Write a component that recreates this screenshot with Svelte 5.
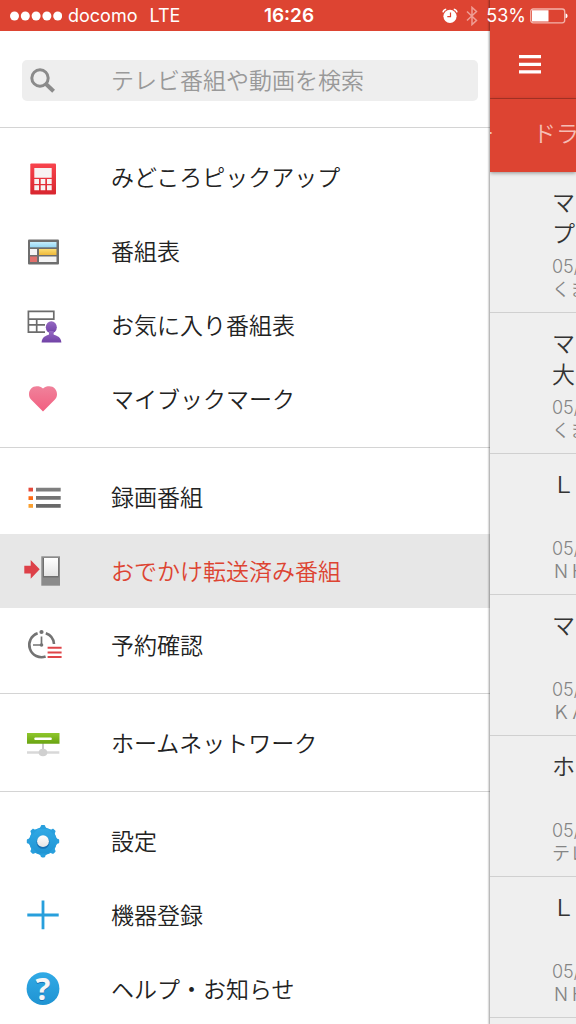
<script lang="ts">
	type Item = { icon: string; label: string };

	const sections: Item[][] = [
		[
			{ icon: 'pickup', label: 'みどころピックアップ' },
			{ icon: 'guide', label: '番組表' },
			{ icon: 'favorite', label: 'お気に入り番組表' },
			{ icon: 'heart', label: 'マイブックマーク' }
		],
		[
			{ icon: 'list', label: '録画番組' },
			{ icon: 'transfer', label: 'おでかけ転送済み番組' },
			{ icon: 'reserve', label: '予約確認' }
		],
		[{ icon: 'network', label: 'ホームネットワーク' }],
		[
			{ icon: 'settings', label: '設定' },
			{ icon: 'plus', label: '機器登録' },
			{ icon: 'help', label: 'ヘルプ・お知らせ' }
		]
	];

	const programs = [
		{ title: 'マ\nプ', date: '05/', channel: 'くま' },
		{ title: 'マ\n大', date: '05/', channel: 'くま' },
		{ title: 'Ｌ', date: '05/', channel: 'ＮＨ' },
		{ title: 'マ', date: '05/', channel: 'ＫＡ' },
		{ title: 'ホ', date: '05/', channel: 'テレ' },
		{ title: 'Ｌ', date: '05/', channel: 'ＮＨ' }
	];

	let active = $state('transfer');
	let query = $state('');
</script>

{#snippet glyph(name: string)}
	<svg class="icon" viewBox="0 0 44 44" aria-hidden="true">
		{#if name === 'pickup'}
			<rect x="9.3" y="8.5" width="25.7" height="31" rx="1" fill="url(#red)" />
			<path
				fill="#f7f3f3"
				d="M13.3 13h17.4v9.7H13.3zM13.3 24H18v5h-4.7zM19.7 24h4.6v5h-4.6zM26 24h4.7v5H26zM13.3 30.2H18v5h-4.7zM19.7 30.2h4.6v5h-4.6zM26 30.2h4.7v5H26z"
			/>
		{:else if name === 'guide'}
			<rect x="7" y="10.5" width="31" height="25" rx="1" fill="#6e6e6e" />
			<path fill="url(#sky)" d="M9 13h26.5v5.3H9z" />
			<path fill="#f4f4f4" d="M9 20h7v6H9zM18 27.5h17.5v5.5H18z" />
			<path fill="url(#gold)" d="M18 20h17.5v6H18z" />
			<path fill="#e0706c" d="M9 27.5h7V33H9z" />
		{:else if name === 'favorite'}
			<path
				fill="none"
				stroke="#6c6c6c"
				stroke-width="1.7"
				d="M24 29.1H7.4V8.4h25.4v7.7H7.4M7.4 21.9H24M15.7 16v13"
			/>
			<ellipse cx="30.3" cy="24.2" rx="5.5" ry="6" fill="url(#purple)" />
			<path
				fill="url(#purple)"
				d="M28 28h4.6v3.2c0 1.3 7.8 1.2 7.8 8.2H20.6c0-7 7.4-6.9 7.4-8.2z"
			/>
		{:else if name === 'heart'}
			<path
				fill="url(#pink)"
				d="M22 34.6 10.3 22.8C8.7 21.2 8 19.4 8 17.2c0-4.7 3.3-8 7.6-8 2.600 0 4.700.6 6.400 2.400 1.700-1.800 3.800-2.400 6.400-2.400 4.300 0 7.600 3.300 7.600 8 0 2.200-.7 4-2.300 5.600z"
			/>
		{:else if name === 'list'}
			<path fill="#e5493a" d="M7.5 12.7H12v3.8H7.5z" />
			<path fill="#ff6a13" d="M7.5 21.2H12V25H7.5z" />
			<path fill="#fba02f" d="M7.5 29H12v3.8H7.5z" />
			<path
				fill="url(#steel)"
				d="M15 12.7h24.700v3.800H15zM15 21h24.700v3.800H15zM15 29h24.700v3.800H15z"
			/>
		{:else if name === 'transfer'}
			<path fill="#dd4048" d="M3.3 16.700h6.400V11l9 9.300-9 9.400v-5.200H3.300z" />
			<path fill="#8b8b8b" d="M20.300 7.300H39v29.400H20.300z" />
			<path fill="#6f6f6f" d="M22 9h15.800v19.500H22z" />
			<path fill="url(#screen)" d="M23 9h14v18H23z" />
		{:else if name === 'reserve'}
			<path
				fill="none"
				stroke="#737373"
				stroke-width="2.600"
				d="M16.600 10.300A12.300 12.300 0 1 0 24.600 33.600M24.800 10.300A12.300 12.300 0 0 1 33 21"
			/>
			<circle cx="20.500" cy="9" r="2.100" fill="#737373" />
			<path fill="none" stroke="#737373" stroke-width="1.700" d="M20.500 13.500V22H12" />
			<circle cx="20.500" cy="22" r="1.800" fill="#737373" />
			<path fill="#df4549" d="M26.600 23.800h14v2h-14zM26.600 28.400h14v2h-14zM26.600 33h14v2h-14z" />
		{:else if name === 'network'}
			<path fill="#c9c9c9" d="M21 22h2v8h-2z" />
			<path fill="#d8d8d8" d="M6 30.200h32.300v2.600H6z" />
			<ellipse cx="22" cy="31.500" rx="4.300" ry="3.800" fill="#d0d0d0" />
			<path fill="url(#green)" d="M6 12h32.500v10.800H6z" />
			<rect x="13.300" y="16.500" width="17.500" height="2.400" rx="1" fill="#fff" />
		{:else if name === 'settings'}
			<circle cx="22" cy="22.300" r="13.800" fill="url(#blue)" />
			{#each [0, 45, 90, 135, 180, 225, 270, 315] as angle}
				<path
					fill="#289fdd"
					transform="rotate({angle} 22 22.300)"
					d="M16.500 10c2.200-.8 3-1.500 3.300-3 .2-.7.600-.9 1.200-.9h2c.6 0 1 .2 1.200.9.3 1.500 1.100 2.200 3.300 3z"
				/>
			{/each}
			<circle cx="22" cy="23.300" r="6.500" fill="#1672b5" />
			<circle cx="22" cy="22.200" r="5.900" fill="url(#screen)" />
		{:else if name === 'plus'}
			<path fill="none" stroke="#279fdc" stroke-width="2.800" d="M6.300 22h31.400M22 7.500v28.700" />
		{:else}
			<circle cx="22" cy="21.700" r="16.400" fill="url(#blue)" />
			<text class="mark shade" x="22" y="34">?</text>
			<text class="mark" x="22" y="33">?</text>
		{/if}
	</svg>
{/snippet}

<svg class="defs" aria-hidden="true">
	<defs>
		<linearGradient id="red" x2="0" y2="1"><stop stop-color="#f8444d" /><stop offset="1" stop-color="#d8262f" /></linearGradient>
		<linearGradient id="sky" x2="0" y2="1"><stop stop-color="#c5eefd" /><stop offset="1" stop-color="#94d6f3" /></linearGradient>
		<linearGradient id="gold" x2="0" y2="1"><stop stop-color="#fbdc72" /><stop offset="1" stop-color="#efb93a" /></linearGradient>
		<linearGradient id="purple" x2="0" y2="1"><stop stop-color="#9569c3" /><stop offset="1" stop-color="#7142a6" /></linearGradient>
		<linearGradient id="pink" x2="0" y2="1"><stop stop-color="#f0829b" /><stop offset="1" stop-color="#f25f80" /></linearGradient>
		<linearGradient id="steel" x2="0" y2="1"><stop stop-color="#808080" /><stop offset="1" stop-color="#666" /></linearGradient>
		<linearGradient id="screen" x2="0" y2="1"><stop stop-color="#fff" /><stop offset="1" stop-color="#e4e4e4" /></linearGradient>
		<linearGradient id="green" x2="0" y2="1"><stop stop-color="#8fc72c" /><stop offset="1" stop-color="#69a312" /></linearGradient>
		<linearGradient id="blue" x2="0" y2="1"><stop stop-color="#31aae6" /><stop offset="1" stop-color="#1f93d2" /></linearGradient>
	</defs>
</svg>

<div class="app">
	<header class="status">
		<div class="carrier">
			<svg width="52" height="12" viewBox="0 0 52 12" fill="#fff" aria-hidden="true">
				{#each [0, 1, 2, 3, 4] as i}
					<circle cx={4.5 + i * 10.8} cy="6" r="4.500" />
				{/each}
			</svg>
			<span>docomo</span>
			<span class="network">LTE</span>
		</div>
		<time>16:26</time>
		<div class="indicators">
			<svg width="16" height="16" viewBox="0 0 16 16" aria-label="アラーム">
				<circle cx="8" cy="8.300" r="6.600" fill="#fff" />
				<path fill="none" stroke="#fff" stroke-width="1.500" d="M1 4.300C1.300 2.500 2.500 1.500 4.200 1.200M15 4.300c-.3-1.800-1.500-2.800-3.200-3.100" />
				<path fill="none" stroke="#dd4432" stroke-width="1.200" d="M8.500 4.500v4.200H5.300" />
			</svg>
			<svg class="bluetooth" width="12" height="20" viewBox="0 0 12 20" aria-label="Bluetooth">
				<path fill="none" stroke="#ef9d94" stroke-width="1.500" d="m1 5.500 9.500 9L6 18.600V1.400l4.500 4.100-9.500 9" />
			</svg>
			<span>53%</span>
			<svg width="38" height="16" viewBox="0 0 38 16" aria-hidden="true">
				<rect x=".7" y="1" width="34" height="13.800" rx="2.500" fill="none" stroke="#f3b3aa" stroke-width="1.300" />
				<path fill="#fff" d="M2 2.300h16.500v11.200H2zM35.600 5.500c2.600.4 2.600 4.400 0 4.800z" />
			</svg>
		</div>
	</header>

	<aside class="drawer">
		<label class="search">
			<svg width="26" height="26" viewBox="0 0 26 26" fill="none" stroke="#8b8b8b" aria-hidden="true">
				<circle cx="10" cy="10" r="8.200" stroke-width="3" />
				<path stroke-width="4" d="m16 16 7.600 7.300" />
			</svg>
			<input type="search" aria-label="検索" placeholder="テレビ番組や動画を検索" bind:value={query} />
		</label>
		<nav>
			{#each sections as section}
				<ul>
					{#each section as { icon, label }}
						<li>
							<a href="#{icon}" class:active={active === icon} onclick={() => (active = icon)}>
								{@render glyph(icon)}
								<span class="label">{label}</span>
							</a>
						</li>
					{/each}
				</ul>
			{/each}
		</nav>
	</aside>

	<main>
		<div class="toolbar">
			<button class="menu" aria-label="メニュー">
				<svg width="22" height="20" viewBox="0 0 22 20" fill="#fff" aria-hidden="true">
					<path d="M0 0h22v3.200H0zM0 7.700h22v3.200H0zM0 15.300h22v3.200H0z" />
				</svg>
			</button>
		</div>
		<div class="tabs">
			<button class="tab previous">ー</button>
			<button class="tab">ドラ</button>
		</div>
		<div class="programs">
			{#each programs as { title, date, channel }}
				<article>
					<h2>{title}</h2>
					<p>{date}</p>
					<p>{channel}</p>
				</article>
			{/each}
		</div>
	</main>
</div>

<style>
	:global(body) {
		margin: 0;
	}

	.app {
		display: grid;
		grid-template-columns: minmax(0, 1fr) 86px;
		grid-template-rows: 31px minmax(0, 1fr);
		height: 100vh;
		overflow: hidden;
		background: #dd4432;
		font-family: 'Noto Sans CJK JP', sans-serif;
		font-size: 23px;
		font-weight: 350;
		color: #222;
	}

	.defs {
		position: absolute;
		width: 0;
		height: 0;
	}

	button {
		padding: 0;
		border: none;
		background: none;
		font: inherit;
		cursor: pointer;
	}

	.status {
		grid-area: 1 / 1 / 2 / 3;
		z-index: 2;
		display: grid;
		grid-template-columns: 1fr auto 1fr;
		align-items: center;
		padding: 0 8px 0 10px;
		font-family: Inter, sans-serif;
		font-size: 18px;
		font-weight: 400;
		line-height: 30px;
		color: #fff;
	}

	.carrier,
	.indicators {
		display: flex;
		align-items: center;
		gap: 6px;
	}

	.network {
		margin-left: 6px;
	}

	.status time {
		font-size: 19px;
		font-weight: 600;
	}

	.indicators {
		justify-content: flex-end;
		gap: 4px;
	}

	.bluetooth {
		margin: 0 4px;
	}

	.drawer {
		grid-area: 2 / 1;
		background: #fff;
		overflow: hidden;
	}

	.search {
		display: flex;
		align-items: center;
		gap: 55px;
		height: 41px;
		margin: 29px 12px 26px 22px;
		padding-left: 8px;
		border-radius: 5px;
		background: #eee;
	}

	.search input {
		flex: 1;
		min-width: 0;
		padding: 0 0 4px;
		border: none;
		outline: none;
		background: none;
		font: inherit;
		appearance: none;
	}

	.search input::placeholder {
		color: #999;
		opacity: 1;
	}

	ul {
		margin: 0;
		padding: 12px 0 11px;
		border-top: 1px solid #d4d4d4;
		list-style: none;
	}

	li a {
		display: flex;
		align-items: center;
		gap: 46px;
		height: 74px;
		padding-left: 21px;
		color: inherit;
		text-decoration: none;
		white-space: nowrap;
	}

	li a.active {
		background: #e7e7e7;
		color: #dd4432;
	}

	.label {
		padding-bottom: 2px;
	}

	.icon {
		flex: none;
		width: 44px;
		height: 44px;
	}

	.mark {
		font-family: 'Open Sans', sans-serif;
		font-size: 31px;
		font-weight: 700;
		text-anchor: middle;
		fill: #f6f6f6;
	}

	.mark.shade {
		fill: #1672b5;
	}

	main {
		grid-area: 1 / 2 / 3 / 3;
		z-index: 1;
		overflow: hidden;
		background: #efefef;
		box-shadow: 0 0 2px 1px rgba(0, 0, 0, 0.4);
	}

	.toolbar {
		display: flex;
		align-items: center;
		height: 67px;
		padding: 31px 0 0 29px;
		border-bottom: 1px solid #b03628;
		background: #dd4432;
	}

	.menu {
		display: flex;
	}

	.tabs {
		display: flex;
		align-items: center;
		gap: 39px;
		height: 65px;
		padding-bottom: 8px;
		background: #dd4432;
		box-shadow: 0 1px 4px rgba(0, 0, 0, 0.4);
	}

	.tab {
		flex: none;
		line-height: 34px;
		color: #f5bdb5;
	}

	.tab.previous {
		display: flex;
		justify-content: flex-end;
		width: 4px;
		overflow: hidden;
	}

	article {
		padding: 14px 0 11px 62px;
		border-bottom: 1px solid #d0d0d0;
	}

	h2 {
		min-height: 62px;
		margin: 0 0 7px;
		font-size: 23px;
		font-weight: 350;
		line-height: 31px;
		color: #333;
		white-space: pre;
	}

	p {
		margin: 0;
		font-family: Inter, 'Noto Sans CJK JP', sans-serif;
		font-size: 18px;
		line-height: 23px;
		color: #858585;
		white-space: nowrap;
	}
</style>
